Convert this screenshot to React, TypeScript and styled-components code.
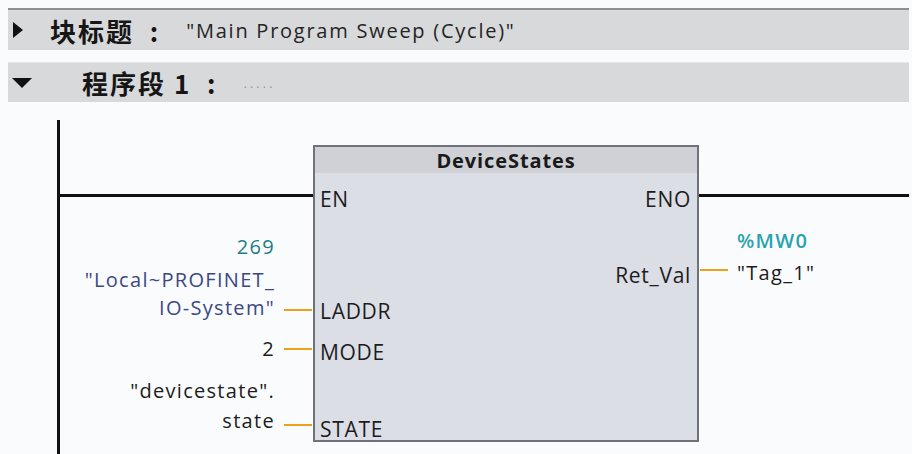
import React from "react";
import styled, { createGlobalStyle } from "styled-components";

const GlobalStyle = createGlobalStyle`
	html, body {
		margin: 0;
		padding: 0;
		background: #fafbfc;
	}
	body {
		font-family: "Open Sans", "Noto Sans", "Noto Sans CJK SC", sans-serif;
		color: #1c1c1e;
	}
`;

const Page = styled.div`
	width: 912px;
	height: 454px;
	overflow: hidden;
	padding: 8px 0 0 8px;
	box-sizing: border-box;
`;

const Bar = styled.div<{ $height: number; $top?: number; $dark?: boolean }>`
	display: flex;
	align-items: center;
	width: 901px;
	height: ${p => p.$height}px;
	margin-top: ${p => p.$top ?? 0}px;
	box-sizing: border-box;
	background: #d8d9db;
	border-top: ${p => (p.$dark ? "2px solid #8e8f92" : "1px solid #e6e7e9")};
`;

const Toggle = styled.span<{ $left: number; $width: number }>`
	display: flex;
	margin-left: ${p => p.$left}px;
	width: ${p => p.$width}px;
`;

const Heading = styled.span<{ $gap: number }>`
	margin-left: ${p => p.$gap}px;
	font-family: "Noto Sans CJK SC", "Open Sans", sans-serif;
	font-weight: 700;
	font-size: 26px;
	color: #161616;
	letter-spacing: 2px;
	white-space: pre;
`;

const Comment = styled.span<{ $gap: number; $small?: boolean }>`
	margin-left: ${p => p.$gap}px;
	font-size: ${p => (p.$small ? 13 : 20)}px;
	letter-spacing: ${p => (p.$small ? 3 : 1.75)}px;
	color: ${p => (p.$small ? "#9a9b9e" : "#242424")};
	white-space: pre;
`;

const Network = styled.div`
	display: grid;
	height: 352px;
	margin-left: 49px;
	padding-top: 18px;
	box-sizing: border-box;
	grid-template-columns: 3px 223px 30px 386px 30px 1fr;
	grid-template-rows: 25px 28px 48px 40px 28px 38px 44px 36px 35px 1fr;
	width: 852px;
`;

const Rail = styled.div`
	grid-column: 1;
	grid-row: 1 / -1;
	background: #111;
`;

const Wire = styled.div<{ $col: string }>`
	grid-column: ${p => p.$col};
	grid-row: 3;
	align-self: center;
	height: 3px;
	margin-top: -3px;
	background: #111;
`;

const Stub = styled.div<{ $col: number; $row: number; $offset?: number }>`
	grid-column: ${p => p.$col};
	grid-row: ${p => p.$row};
	align-self: center;
	height: 2px;
	margin: ${p => p.$offset ?? 0}px 1px 0 1px;
	background: #eaa21a;
`;

const Block = styled.div`
	grid-column: 4;
	grid-row: 2 / 10;
	display: flex;
	flex-direction: column;
	border: 2px solid #6f727a;
	background: #dcdee6;
`;

const BlockTitle = styled.div`
	height: 26px;
	display: flex;
	align-items: center;
	justify-content: center;
	background: #cfd1d7;
	font-weight: 700;
	font-size: 20px;
	letter-spacing: 0.9px;
	color: #1a1a1a;
`;

type Tone = "black" | "teal" | "blue" | "cyan";

const toneColor: Record<Tone, string> = {
	black: "#1c1c1e",
	teal: "#1d7d88",
	blue: "#3a4886",
	cyan: "#2aa3ae",
};

const Label = styled.div<{
	$col: number;
	$row: number;
	$side: "left" | "right";
	$tone?: Tone;
	$offset?: number;
	$pad?: number;
	$bold?: boolean;
}>`
	grid-column: ${p => p.$col};
	grid-row: ${p => p.$row};
	align-self: center;
	justify-self: ${p => (p.$side === "right" ? "end" : "start")};
	margin-top: ${p => p.$offset ?? 0}px;
	padding: 0 ${p => (p.$side === "right" ? p.$pad ?? 8 : 0)}px 0 ${p => (p.$side === "left" ? p.$pad ?? 8 : 0)}px;
	font-size: 20px;
	line-height: 26px;
	letter-spacing: 1.3px;
	font-weight: ${p => (p.$bold ? 600 : 400)};
	color: ${p => toneColor[p.$tone ?? "black"]};
	white-space: pre;
`;

const PinLabel = styled(Label)`
	font-size: 21px;
	letter-spacing: 0.7px;
`;

const PlayIcon = () => (
	<svg width="10" height="16" viewBox="0 0 10 16">
		<path d="M0 0 L10 8 L0 16 Z" fill="#111" />
	</svg>
);

const DownIcon = () => (
	<svg width="20" height="10" viewBox="0 0 20 10">
		<path d="M0 0 L20 0 L10 10 Z" fill="#111" />
	</svg>
);

export default function App() {
	return (
		<>
			<GlobalStyle />
			<Page>
				<Bar $height={42} $dark>
					<Toggle $left={5} $width={10}>
						<PlayIcon />
					</Toggle>
					<Heading $gap={27}>块标题  :</Heading>
					<Comment $gap={26}>"Main Program Sweep (Cycle)"</Comment>
				</Bar>
				<Bar $height={40} $top={12}>
					<Toggle $left={4} $width={20}>
						<DownIcon />
					</Toggle>
					<Heading $gap={50}>程序段 1  :</Heading>
					<Comment $gap={26} $small>.....</Comment>
				</Bar>

				<Network>
					<Rail />
					<Wire $col="2 / 4" />
					<Block>
						<BlockTitle>DeviceStates</BlockTitle>
					</Block>
					<Wire $col="5 / 7" />

					{/* block pins */}
					<PinLabel $col={4} $row={3} $side="left" $offset={4} $pad={7}>EN</PinLabel>
					<PinLabel $col={4} $row={3} $side="right" $offset={4} $pad={8}>ENO</PinLabel>
					<PinLabel $col={4} $row={5} $side="right" $offset={0} $pad={8}>Ret_Val</PinLabel>
					<PinLabel $col={4} $row={6} $side="left" $offset={6} $pad={7}>LADDR</PinLabel>
					<PinLabel $col={4} $row={7} $side="left" $offset={6} $pad={7}>MODE</PinLabel>
					<PinLabel $col={4} $row={9} $side="left" $offset={8} $pad={7}>STATE</PinLabel>

					{/* inputs */}
					<Label $col={2} $row={4} $side="right" $tone="teal" $offset={12}>269</Label>
					<Label $col={2} $row={5} $side="right" $tone="blue" $offset={10}>"Local~PROFINET_</Label>
					<Label $col={2} $row={6} $side="right" $tone="blue">IO-System"</Label>
					<Stub $col={3} $row={6} $offset={4} />
					<Label $col={2} $row={7} $side="right">2</Label>
					<Stub $col={3} $row={7} />
					<Label $col={2} $row={8} $side="right" $offset={4}>"devicestate".</Label>
					<Label $col={2} $row={9} $side="right" $offset={-8}>state</Label>
					<Stub $col={3} $row={9} />

					{/* outputs */}
					<Label $col={6} $row={4} $side="left" $tone="cyan" $bold>%MW0</Label>
					<Stub $col={5} $row={5} $offset={-10} />
					<Label $col={6} $row={5} $side="left" $offset={-4}>"Tag_1"</Label>
				</Network>
			</Page>
		</>
	);
}
